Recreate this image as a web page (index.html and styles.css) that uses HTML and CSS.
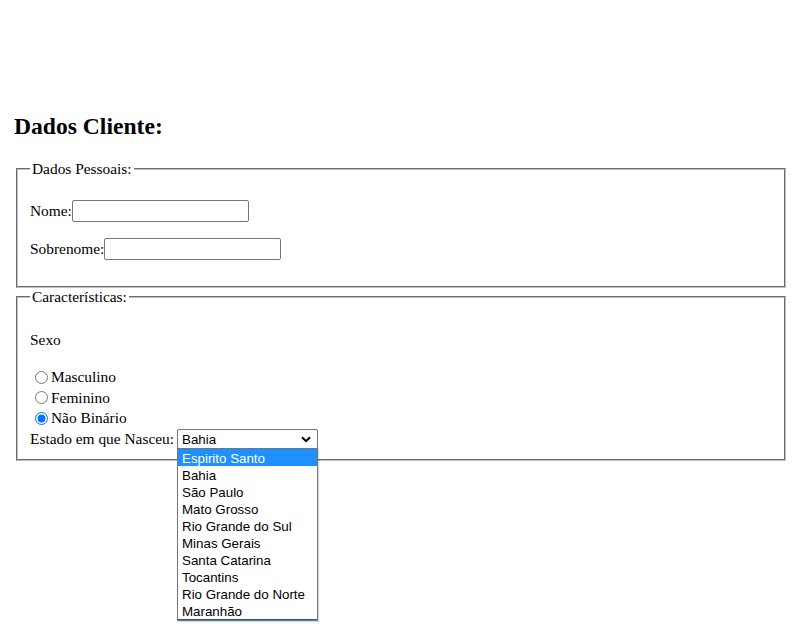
FILE: index.html
```html
<!DOCTYPE html>
<html lang="pt">
<head>
<meta charset="utf-8">
<title>Dados Cliente</title>
<link rel="stylesheet" href="styles.css">
</head>
<body>
<div class="page">
  <h2 class="title">Dados Cliente:</h2>
  <form class="form">
    <fieldset class="group">
      <legend class="legend">Dados Pessoais:</legend>
      <p class="field"><label>Nome:</label><input class="text" type="text"></p>
      <p class="field"><label>Sobrenome:</label><input class="text" type="text"></p>
    </fieldset>
    <fieldset class="group group-two">
      <legend class="legend">Características:</legend>
      <p class="field sexo">Sexo</p>
      <div class="radios">
        <label class="radio"><input type="radio" name="sexo">Masculino</label>
        <label class="radio"><input type="radio" name="sexo">Feminino</label>
        <label class="radio"><input type="radio" name="sexo" checked>Não Binário</label>
      </div>
      <div class="state-row">
        <span>Estado em que Nasceu:</span>
        <span class="select">
          <span class="select-value">Bahia</span>
          <svg class="chev" width="10" height="7" viewBox="0 0 10 7"><path d="M1 1.2 L5 5.2 L9 1.2" fill="none" stroke="#000" stroke-width="2"/></svg>
        </span>
      </div>
    </fieldset>
    <div class="dropdown">
      <span class="opt active">Espirito Santo</span>
      <span class="opt">Bahia</span>
      <span class="opt">São Paulo</span>
      <span class="opt">Mato Grosso</span>
      <span class="opt">Rio Grande do Sul</span>
      <span class="opt">Minas Gerais</span>
      <span class="opt">Santa Catarina</span>
      <span class="opt">Tocantins</span>
      <span class="opt">Rio Grande do Norte</span>
      <span class="opt">Maranhão</span>
      <span class="opt-edge"></span>
    </div>
  </form>
</div>
</body>
</html>
```
FILE: styles.css
```css
html, body {
  margin: 0;
  background: #fff;
}
body {
  font-family: "Liberation Serif", "Times New Roman", serif;
  font-size: 15.4px;
  line-height: 18px;
  color: #000;
}
.page {
  box-sizing: border-box;
  min-height: 624px;
  padding: 112px 0 0 14px;
}
.title {
  font-size: 23.6px;
  font-weight: bold;
  margin: 0 0 20px 0;
  line-height: 28px;
}
.form {
  position: relative;
}
.group {
  box-sizing: border-box;
  width: 770px;
  margin: 0 2px;
  border: 2px groove #c0c0c0;
  padding: 6px 12px 10px 12px;
}
.group-two {
  padding-bottom: 9px;
}
.legend {
  padding: 0 2px;
}
.field {
  margin: 16px 0;
}
.sexo {
  margin: 19px 0 18px 0;
}
.text {
  width: 177px;
  box-sizing: border-box;
  height: 22px;
  font-size: 13.333px;
  font-family: "Liberation Sans", Arial, sans-serif;
  margin: 0;
  border: 1px solid #767676;
  border-radius: 2px;
  padding: 1px 2px;
  vertical-align: baseline;
}
.radios {
  display: flex;
  flex-direction: column;
}
.radio {
  display: flex;
  align-items: center;
  height: 20.5px;
}
.radio input {
  margin: 0 3px 0 5px;
  width: 13px;
  height: 13px;
}
.state-row {
  display: flex;
  align-items: center;
  gap: 3px;
  height: 21px;
}
.select {
  box-sizing: border-box;
  width: 141px;
  height: 20px;
  display: flex;
  align-items: center;
  justify-content: space-between;
  border: 1px solid #767676;
  border-radius: 2px;
  padding: 1px 6px 0 4px;
  font-family: "Liberation Sans", Arial, sans-serif;
  font-size: 13.333px;
}
.chev {
  display: block;
}
.dropdown {
  position: absolute;
  left: 163px;
  top: 288px;
  box-sizing: border-box;
  width: 141px;
  background: #fff;
  border: 1px solid #767676;
  box-shadow: 1px 1px 1px rgba(0, 0, 0, 0.15);
  display: flex;
  flex-direction: column;
  font-family: "Liberation Sans", Arial, sans-serif;
  font-size: 13.333px;
}
.opt {
  box-sizing: border-box;
  height: 17px;
  line-height: 17px;
  padding: 1px 0 0 4px;
  white-space: nowrap;
}
.opt.active {
  background: #1e90ff;
  color: #fff;
}
.opt-edge {
  height: 1px;
  background: #1a5fa8;
}
```
